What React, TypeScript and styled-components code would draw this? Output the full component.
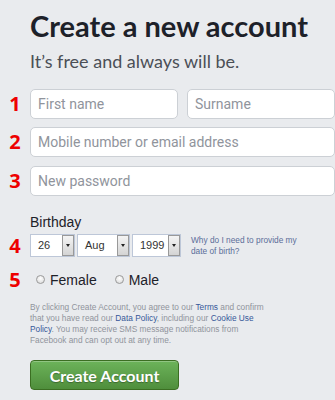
import styled, { createGlobalStyle } from "styled-components";

const GlobalStyle = createGlobalStyle`
  html, body {
    margin: 0;
    padding: 0;
    background: #e9ebee;
    overflow: hidden;
  }
`;

const Page = styled.div`
  width: 335px;
  height: 400px;
  padding-top: 9px;
  box-sizing: border-box;
  overflow: hidden;
  display: flex;
  flex-direction: column;
`;

const Row = styled.div<{ $top?: number }>`
  display: flex;
  align-items: center;
  margin-top: ${(p) => p.$top ?? 0}px;
`;

const Num = styled.div`
  width: 30px;
  flex: none;
  text-align: center;
  font-family: "Open Sans", "Liberation Sans", sans-serif;
  font-weight: 700;
  font-size: 20px;
  line-height: 20px;
  color: #ee0000;
`;

const Body = styled.div`
  width: 305px;
  flex: none;
`;

const Title = styled.h1`
  margin: 0;
  font-family: Lato, "Open Sans", sans-serif;
  font-weight: 700;
  font-size: 29px;
  line-height: 34px;
  color: #1d2129;
  white-space: nowrap;
`;

const Subtitle = styled.div`
  font-family: Lato, "Open Sans", sans-serif;
  font-size: 18px;
  line-height: 22px;
  color: #4b4f56;
`;

const Fields = styled.div`
  display: flex;
  gap: 9px;
`;

const Input = styled.input`
  flex: 1;
  min-width: 0;
  height: 30px;
  box-sizing: border-box;
  border: 1px solid #ccd0d5;
  border-radius: 5px;
  background: #fff;
  padding: 0 7px;
  font-family: Roboto, "Liberation Sans", sans-serif;
  font-size: 14px;
  color: #1d2129;
  outline: none;
  &::placeholder {
    color: #90949c;
  }
`;

const Label = styled.div`
  font-family: "Liberation Sans", Arial, sans-serif;
  font-size: 14px;
  line-height: 16px;
  color: #1d2129;
`;

const Selects = styled.div`
  display: flex;
  align-items: center;
  gap: 2px;
`;

const SelectBox = styled.div<{ $w: number }>`
  width: ${(p) => p.$w}px;
  height: 23px;
  box-sizing: border-box;
  display: flex;
  border: 1px solid #bdc7d8;
  background: #fff;
`;

const SelectValue = styled.span`
  flex: 1;
  padding-left: 7px;
  font-family: "Liberation Sans", Arial, sans-serif;
  font-size: 11px;
  line-height: 21px;
  color: #333;
`;

const SelectArrow = styled.span`
  width: 12px;
  flex: none;
  box-sizing: border-box;
  border: 1px solid #999;
  background: linear-gradient(#f4f4f4, #d4d4d4);
  display: flex;
  align-items: center;
  justify-content: center;
  &::after {
    content: "";
    border-left: 2.5px solid transparent;
    border-right: 2.5px solid transparent;
    border-top: 3px solid #222;
  }
`;

const Why = styled.a`
  margin-left: 8px;
  width: 110px;
  font-family: "Liberation Sans", Arial, sans-serif;
  font-size: 8.3px;
  line-height: 10.5px;
  color: #5b6d99;
`;

const Radios = styled.div`
  display: flex;
  align-items: center;
  padding-left: 6px;
  height: 18px;
`;

const RadioLabel = styled.label`
  display: flex;
  align-items: center;
  gap: 5px;
  margin-right: 18px;
  font-family: "Liberation Sans", Arial, sans-serif;
  font-size: 14px;
  line-height: 18px;
  color: #1d2129;
`;

const RadioDot = styled.span`
  width: 9px;
  height: 9px;
  box-sizing: border-box;
  border-radius: 50%;
  border: 1px solid #9a9a9a;
  background: radial-gradient(circle at 50% 35%, #ffffff, #d6d6d6);
  margin-top: -2px;
`;

const Terms = styled.p`
  margin: 0;
  white-space: nowrap;
  font-family: "Liberation Sans", Arial, sans-serif;
  font-size: 8.3px;
  line-height: 11px;
  color: #90949c;
`;

const TermsLink = styled.a`
  color: #365899;
`;

const Submit = styled.button`
  width: 149px;
  height: 30px;
  box-sizing: border-box;
  border: 1px solid #3b6e22;
  border-radius: 4px;
  background: linear-gradient(#6cb35a, #4f8e3c);
  box-shadow: inset 0 1px 0 rgba(255, 255, 255, 0.25);
  color: #fff;
  font-family: Lato, "Open Sans", sans-serif;
  font-weight: 700;
  font-size: 16px;
  text-shadow: 0 1px 1px rgba(0, 0, 0, 0.3);
  padding: 0;
`;

export default function App() {
  return (
    <>
      <GlobalStyle />
      <Page>
        <Row>
          <Num />
          <Body>
            <Title>Create a new account</Title>
          </Body>
        </Row>
        <Row $top={7}>
          <Num />
          <Body>
            <Subtitle>It’s free and always will be.</Subtitle>
          </Body>
        </Row>
        <Row $top={17}>
          <Num>1</Num>
          <Body>
            <Fields>
              <Input placeholder="First name" />
              <Input placeholder="Surname" />
            </Fields>
          </Body>
        </Row>
        <Row $top={8}>
          <Num>2</Num>
          <Body>
            <Fields>
              <Input placeholder="Mobile number or email address" />
            </Fields>
          </Body>
        </Row>
        <Row $top={9}>
          <Num>3</Num>
          <Body>
            <Fields>
              <Input type="password" placeholder="New password" />
            </Fields>
          </Body>
        </Row>
        <Row $top={18}>
          <Num />
          <Body>
            <Label>Birthday</Label>
          </Body>
        </Row>
        <Row $top={4}>
          <Num>4</Num>
          <Body>
            <Selects>
              <SelectBox $w={45}>
                <SelectValue>26</SelectValue>
                <SelectArrow />
              </SelectBox>
              <SelectBox $w={53}>
                <SelectValue>Aug</SelectValue>
                <SelectArrow />
              </SelectBox>
              <SelectBox $w={49}>
                <SelectValue>1999</SelectValue>
                <SelectArrow />
              </SelectBox>
              <Why>Why do I need to provide my date of birth?</Why>
            </Selects>
          </Body>
        </Row>
        <Row $top={13}>
          <Num>5</Num>
          <Body>
            <Radios>
              <RadioLabel>
                <RadioDot />
                Female
              </RadioLabel>
              <RadioLabel>
                <RadioDot />
                Male
              </RadioLabel>
            </Radios>
          </Body>
        </Row>
        <Row $top={12}>
          <Num />
          <Body>
            <Terms>
              By clicking Create Account, you agree to our{" "}
              <TermsLink>Terms</TermsLink> and confirm
              <br />
              that you have read our <TermsLink>Data Policy</TermsLink>,
              including our <TermsLink>Cookie Use</TermsLink>
              <br />
              <TermsLink>Policy</TermsLink>. You may receive SMS message
              notifications from
              <br />
              Facebook and can opt out at any time.
            </Terms>
          </Body>
        </Row>
        <Row $top={14}>
          <Num />
          <Body>
            <Submit>Create Account</Submit>
          </Body>
        </Row>
      </Page>
    </>
  );
}
